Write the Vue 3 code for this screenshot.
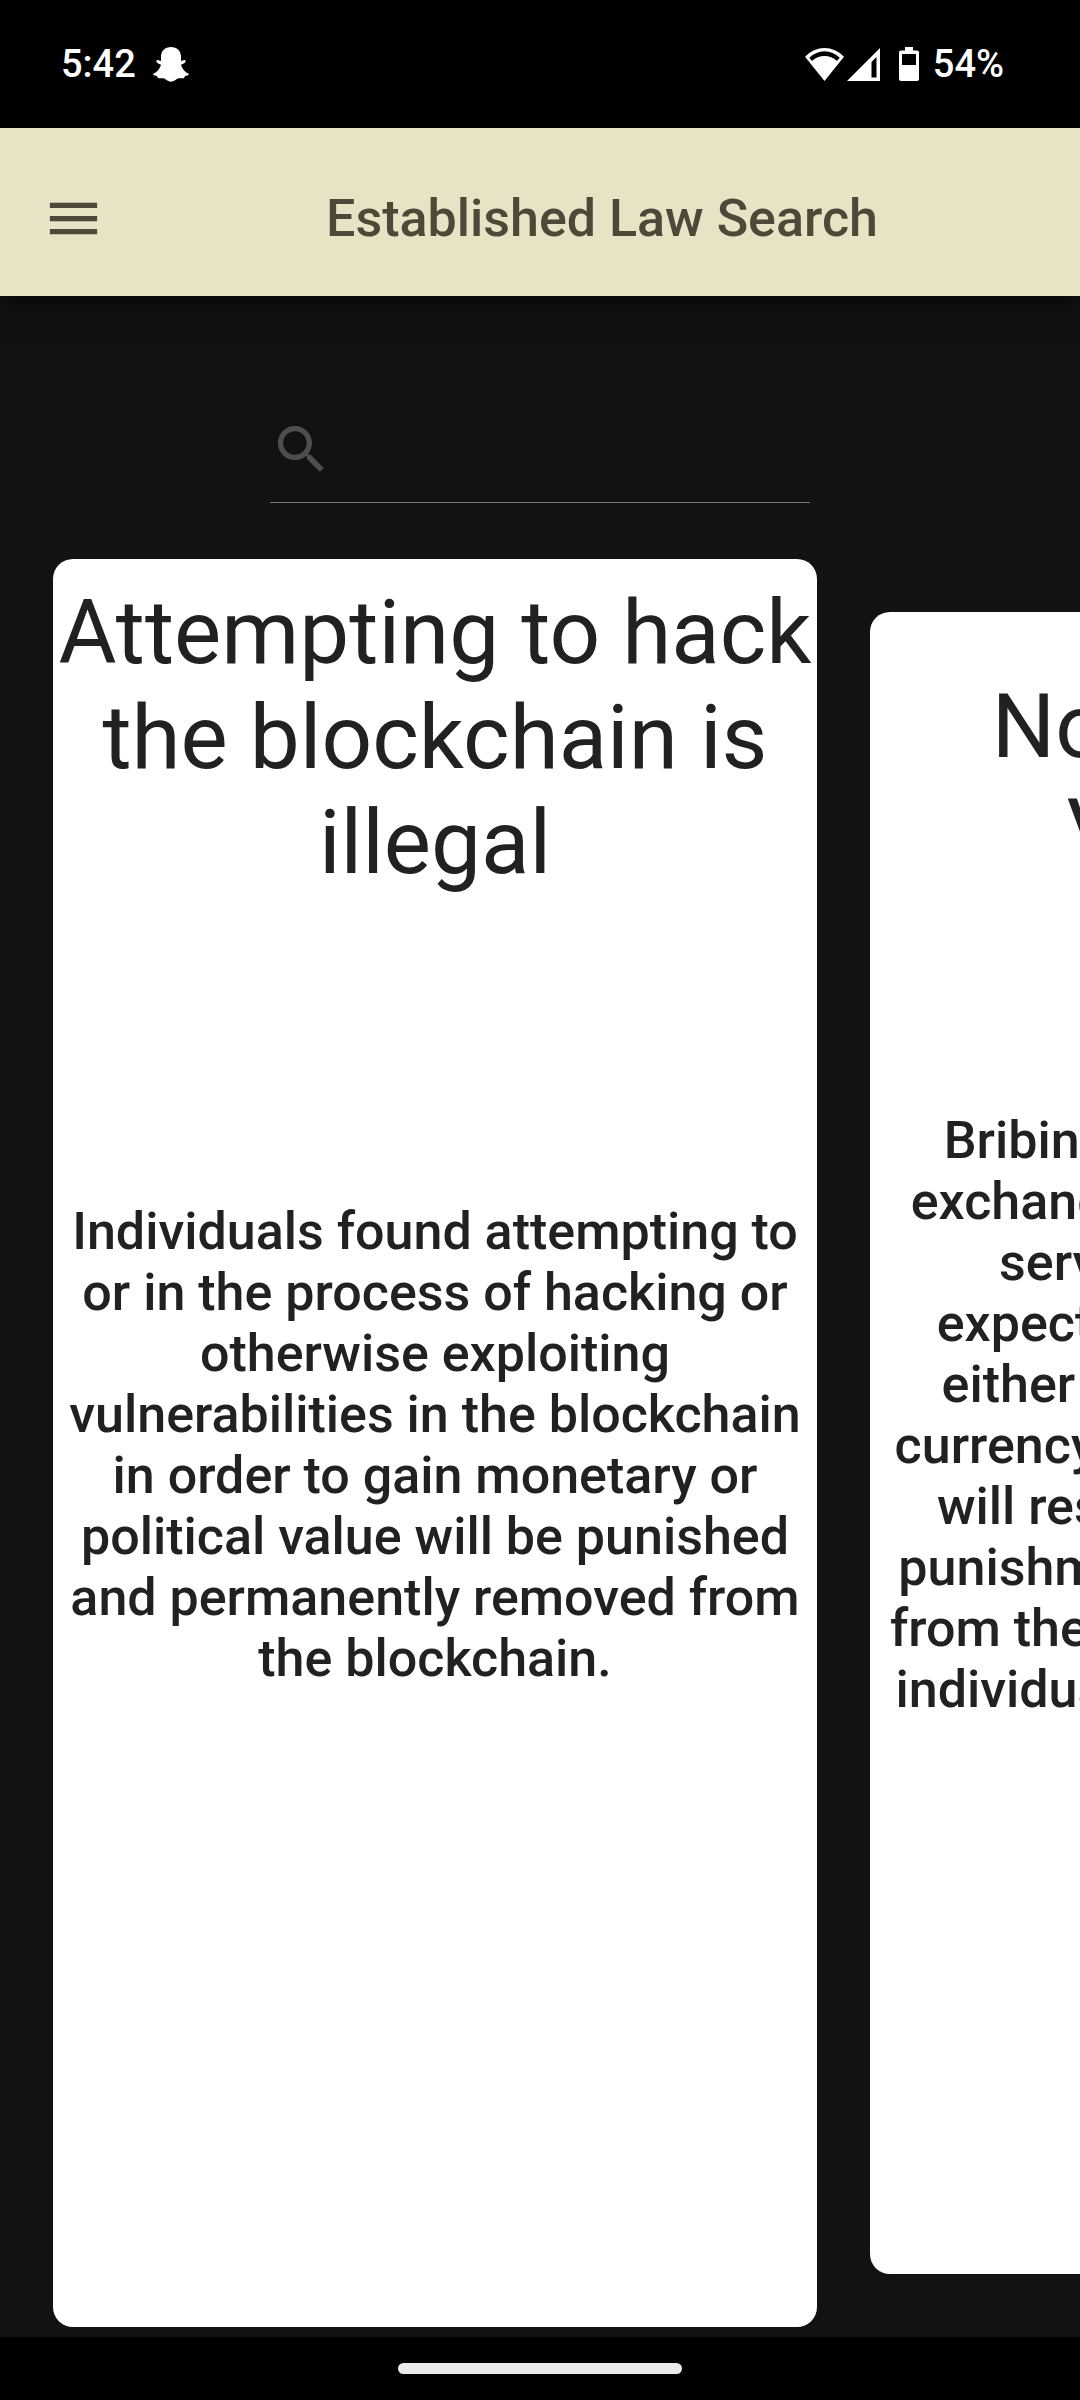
<script setup>
import { ref } from 'vue'

const query = ref('')

const laws = [
  {
    id: 'hacking',
    active: true,
    title: ['Attempting to hack', 'the blockchain is', 'illegal'],
    body: [
      'Individuals found attempting to',
      'or in the process of hacking or',
      'otherwise exploiting',
      'vulnerabilities in the blockchain',
      'in order to gain monetary or',
      'political value will be punished',
      'and permanently removed from',
      'the blockchain.',
    ],
  },
  {
    id: 'bribery',
    active: false,
    title: ['No Bribe for', 'Verdicts'],
    body: [
      'Bribing individuals in the',
      'exchange of any goods and',
      'services, having the',
      'expectations of receiving',
      'either political powers or',
      'currency from any individual,',
      'will result in a permanent',
      'punishment and the removal',
      'from the blockchain of all the',
      'individuals who are involved.',
    ],
  },
]
</script>

<template>
  <div class="screen">
    <div class="status">
      <span class="status-text">5:42</span>
      <svg class="ghost" width="36" height="35" viewBox="0 0 36 35" fill="#fff">
        <path d="M18 0C12 0 8 4 8 9.500V14C6.500 14 5 12.500 3.500 13.200C2.800 15 4.500 16.500 8 17.700C7 21.500 4.500 25 0 27C0.500 28.600 2.500 28.800 4 29C4.500 30 4.500 31 5.700 31.300C8 31.500 9.500 31 11.300 31.600C13.500 33 15 34.700 18 34.700S22.500 33 24.700 31.600C26.500 31 28 31.500 30.300 31.300C31.500 31 31.500 30 32 29C33.500 28.800 35.500 28.600 36 27C31.500 25 29 21.500 28 17.700C31.500 16.500 33.200 15 32.500 13.200C31 12.500 29.500 14 28 14V9.500C28 4 24 0 18 0Z" />
      </svg>
      <span class="spacer"></span>
      <svg width="39" height="33" viewBox="0 0 39 33" fill="#fff">
        <path fill-rule="evenodd" d="M0 8.700Q8.500 0 19.500 0T39 8.700L19.500 33ZM4.300 9.800L7 13Q12.500 8 19.500 8T32 13L34.700 9.800Q28 3.300 19.500 3.300T4.300 9.800Z" />
      </svg>
      <svg class="signal" width="33" height="33" viewBox="0 0 33 33" fill="#fff">
        <path fill-rule="evenodd" d="M0 33H33V0ZM24.500 14L29.500 9V29.500H24.500Z" />
      </svg>
      <svg class="battery" width="20" height="34" viewBox="0 0 20 34" fill="#fff">
        <path fill-rule="evenodd" d="M6 0H14V3.500H18Q20 3.500 20 5.500V32Q20 34 18 34H2Q0 34 0 32V5.500Q0 3.500 2 3.500H6ZM3 7V18H17V7Z" />
      </svg>
      <span class="status-text">54%</span>
    </div>

    <header class="app-bar">
      <button class="menu" type="button" aria-label="Open navigation menu">
        <svg width="63" height="63" viewBox="0 0 24 24" fill="currentColor">
          <path d="M3 18h18v-2H3v2zm0-5h18v-2H3v2zm0-7v2h18V6H3z" />
        </svg>
      </button>
      <h1>Established Law Search</h1>
    </header>

    <main>
      <label class="search">
        <svg width="63" height="63" viewBox="0 0 24 24" fill="#4e4e4e">
          <path d="M15.500 14h-.79l-.28-.27C15.410 12.590 16 11.110 16 9.500 16 5.910 13.090 3 9.500 3S3 5.910 3 9.500 5.910 16 9.500 16c1.610 0 3.090-.59 4.230-1.570l.27.28v.79l5 4.990L20.490 19l-4.990-5zm-6 0C7.010 14 5 11.990 5 9.500S7.010 5 9.500 5 14 7.010 14 9.500 11.990 14 9.500 14z" />
        </svg>
        <input v-model="query" type="text" aria-label="Search laws" />
      </label>

      <section class="carousel">
        <article v-for="law in laws" :key="law.id" class="card" :class="{ active: law.active }">
          <h2>
            <span v-for="line in law.title" :key="line" class="line">{{ line }}</span>
          </h2>
          <p>
            <span v-for="line in law.body" :key="line" class="line">{{ line }}</span>
          </p>
        </article>
      </section>
    </main>

    <div class="nav"><div class="pill"></div></div>
  </div>
</template>

<style>
body {
  margin: 0;
  background: #000;
}
</style>

<style scoped>
.screen {
  display: flex;
  flex-direction: column;
  min-height: 100vh;
  overflow: hidden;
  background: #121212;
  font-family: Roboto, "Liberation Sans", sans-serif;
}
svg {
  display: block;
  flex: none;
}
.status {
  display: flex;
  align-items: center;
  height: 128px;
  padding: 0 76px 0 61px;
  background: #000;
  color: #fff;
}
.status-text {
  font-size: 38px;
  line-height: 44px;
  font-weight: 500;
}
.ghost {
  margin-left: 17px;
}
.spacer {
  flex: 1;
}
.signal {
  margin-left: 3px;
}
.battery {
  margin: 0 14px 0 19px;
}
.app-bar {
  display: flex;
  align-items: center;
  box-sizing: border-box;
  height: 168px;
  padding-top: 13px;
  background: #e7e3c4;
  color: #4c493a;
  box-shadow: 0 6px 28px rgba(0, 0, 0, 0.7);
}
.menu {
  width: 124px;
  padding: 0 0 0 42px;
  border: 0;
  background: none;
  color: inherit;
}
h1 {
  flex: 1;
  margin: 0;
  font-size: 52px;
  line-height: 62px;
  font-weight: 500;
  text-align: center;
}
main {
  display: flex;
  flex: 1;
  flex-direction: column;
}
.search {
  display: flex;
  align-items: center;
  box-sizing: border-box;
  width: 50%;
  height: 207px;
  margin: 0 auto 56px;
  padding-top: 122px;
  padding-bottom: 21px;
  border-bottom: 1px solid #7a7a7a;
}
.search input {
  flex: 1;
  min-width: 0;
  height: 63px;
  padding: 0 12px;
  border: 0;
  outline: 0;
  background: none;
  color: #fff;
  font: 400 42px/48px Roboto, sans-serif;
}
.carousel {
  display: flex;
  flex: 1;
  gap: 53px;
  padding: 0 0 10px 53px;
}
.card {
  flex: 0 0 calc(100% - 309px);
  box-sizing: border-box;
  margin: 53px 0;
  padding-top: 62px;
  border-radius: 20px;
  background: #fff;
  color: #212121;
  text-align: center;
}
.card.active {
  flex-basis: calc(100% - 263px);
  margin: 0;
  padding-top: 21px;
}
h2 {
  margin: 0 0 226px;
  font-size: 89px;
  line-height: 105px;
  font-weight: 400;
}
.active h2 {
  margin-bottom: 306px;
}
p {
  margin: 0;
  font-size: 52px;
  line-height: 61px;
  font-weight: 500;
}
.line {
  display: block;
  white-space: nowrap;
}
.nav {
  display: flex;
  align-items: center;
  justify-content: center;
  height: 63px;
  background: #000;
}
.pill {
  width: 284px;
  height: 11px;
  border-radius: 6px;
  background: #ebebeb;
}
</style>
